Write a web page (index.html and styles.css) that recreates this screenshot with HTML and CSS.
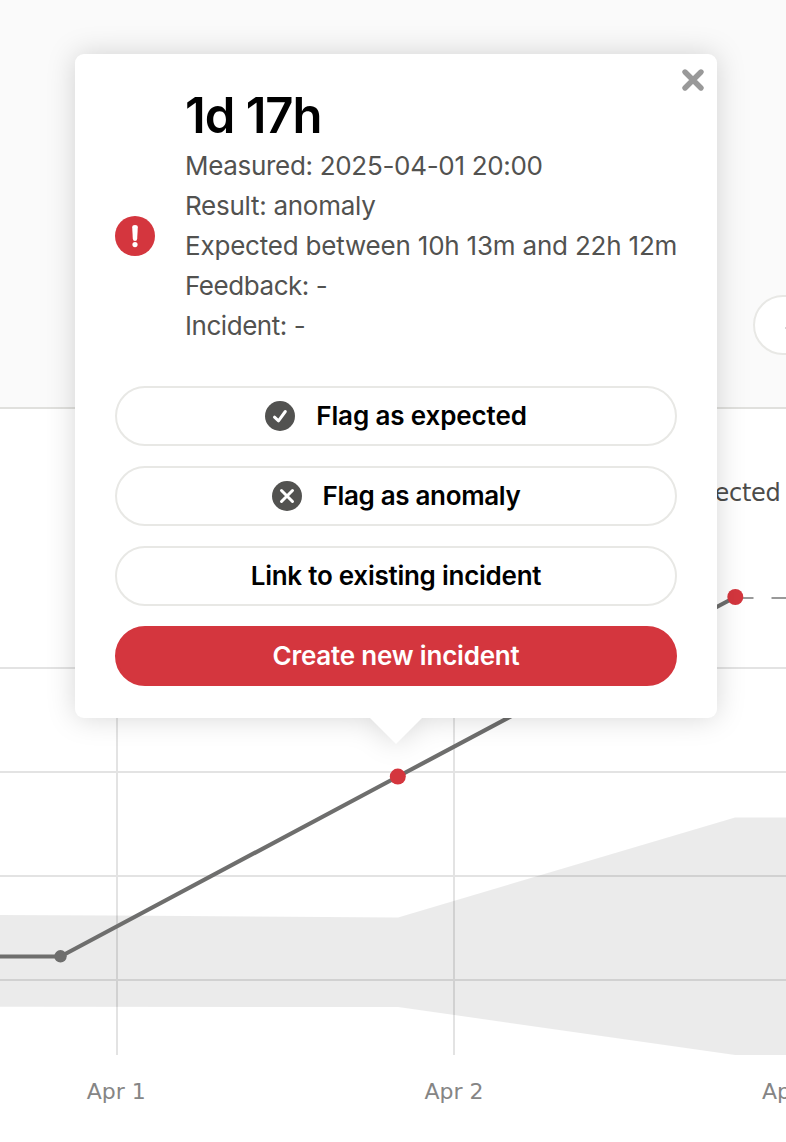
FILE: index.html
```html
<!DOCTYPE html>
<html lang="en">
<head>
<meta charset="utf-8">
<title>Measurement details</title>
<link rel="stylesheet" href="styles.css">
</head>
<body>
<div class="page">
  <header class="toolbar"><button class="toolbar-button" aria-label="More"><svg class="toolbar-icon" width="20" height="20" viewBox="0 0 20 20"><path d="M0.500 13.500L10 4L19.500 13.500"/></svg></button></header>
  <main class="chart">
    <svg class="plot" width="786" height="733" viewBox="0 409 786 733">
      <g class="grid">
        <path d="M0 668H786M0 772H786M0 876H786M0 980H786M117 668V1055M454 668V1055"/>
      </g>
      <path class="band" d="M0 915L117 915.5L398 917.5L735 817.5H786V1055H735L398 1007L0 1006.7Z"/>
      <path class="series" d="M0 956.500H60.500L398 776.500L735.500 597"/>
      <path class="forecast" d="M735 598H753.500M771.500 598H786"/>
      <circle class="point" cx="60.500" cy="956.300" r="6.200"/>
      <circle class="point-alert" cx="397.800" cy="776.600" r="8"/>
      <circle class="point-alert" cx="735.300" cy="597" r="8"/>
      <text class="legend" x="780.500" y="501" text-anchor="end">Expected</text>
      <g class="axis">
        <text x="86.800" y="1099">Apr 1</text>
        <text x="424.500" y="1099">Apr 2</text>
        <text x="762" y="1099">Apr 3</text>
      </g>
    </svg>
  </main>
  <section class="popup">
    <button class="close" aria-label="Close">
      <svg width="24" height="24" viewBox="0 0 24 24"><path d="M4 4L20 20M20 4L4 20"/></svg>
    </button>
    <div class="summary">
      <svg class="alert" width="40" height="40" viewBox="0 0 40 40">
        <circle cx="20" cy="20" r="20"/>
        <path d="M17.200 11.200Q17.200 9 20 9Q22.800 9 22.800 11.200L22.200 22.800Q22 25 20 25Q18 25 17.800 22.800Z"/>
        <circle class="dot" cx="20" cy="28.600" r="2.600"/>
      </svg>
      <div class="details">
        <h1 class="title">1d 17h</h1>
        <p class="measured">Measured: 2025-04-01 20:00</p>
        <p class="result">Result: anomaly</p>
        <p class="expected">Expected between 10h 13m and 22h 12m</p>
        <p class="feedback">Feedback: -</p>
        <p class="incident">Incident: -</p>
      </div>
    </div>
    <div class="actions">
      <button class="action"><svg class="icon" width="30" height="30" viewBox="0 0 30 30"><circle cx="15" cy="15" r="15"/><path d="M9.500 16.200L13.500 19.800L20.300 10.500"/></svg><span class="label flag-expected">Flag as expected</span></button>
      <button class="action"><svg class="icon" width="30" height="30" viewBox="0 0 30 30"><circle cx="15" cy="15" r="15"/><path d="M9.500 9.500L20.500 20.500M20.500 9.500L9.500 20.500"/></svg><span class="label flag-anomaly">Flag as anomaly</span></button>
      <button class="action"><span class="label link">Link to existing incident</span></button>
      <button class="action primary"><span class="label create">Create new incident</span></button>
    </div>
    <svg class="arrow" width="54" height="28" viewBox="0 0 54 28"><path d="M0 0H54L27 27Z"/></svg>
  </section>
</div>
</body>
</html>
```
FILE: styles.css
```css
* { box-sizing: border-box; }
body { margin: 0; background: #fff; font-family: Inter, "Liberation Sans", Arial, sans-serif; }
button { font: inherit; padding: 0; }
.page { position: relative; width: 786px; height: 1142px; overflow: hidden; }
.toolbar { height: 409px; background: #fafafa; border-bottom: 2px solid #e0e0dd; padding: 295px 0 0 753px; }
.toolbar-button { display: flex; align-items: center; width: 200px; height: 60px; padding-left: 30px; border: 2px solid #e8e8e5; border-radius: 30px; background: #fff; }
.toolbar-icon path { fill: none; stroke: #aaa; stroke-width: 1.5; }
.chart { height: 733px; }
.plot { display: block; }
.grid path { fill: none; stroke: #000; stroke-opacity: .11; stroke-width: 2; }
.band { fill: #000; fill-opacity: .08; }
.series { fill: none; stroke: #6e6e6d; stroke-width: 4.2; stroke-linejoin: round; }
.forecast { fill: none; stroke: #999; stroke-width: 2; }
.point { fill: #6e6e6d; }
.point-alert { fill: #d4363e; }
.legend { font: 24px "DejaVu Sans", Verdana, sans-serif; letter-spacing: -.3px; fill: #4c4c4a; }
.axis { font: 22px "DejaVu Sans", Verdana, sans-serif; fill: #858585; }
.popup { position: absolute; left: 75px; top: 54px; width: 642px; height: 664px; padding: 36px 40px 32px; border-radius: 9px; background: #fff; filter: drop-shadow(0 0 14px rgba(0, 0, 0, .16)); }
.arrow { position: absolute; left: 294px; top: 663px; fill: #fff; }
.close { position: absolute; left: 606px; top: 14px; width: 24px; height: 24px; border: 0; background: none; }
.close svg { display: block; }
.close path { fill: none; stroke: #999; stroke-width: 5.4; stroke-linecap: round; }
.summary { display: flex; align-items: center; gap: 30px; height: 256px; }
.alert { flex: none; margin-top: 36px; fill: #d4363e; }
.alert path, .alert .dot { fill: #fff; }
.details { color: #525250; font-size: 26px; line-height: 40px; white-space: nowrap; }
.details p { margin: 0; }
.measured { letter-spacing: -.31px; }
.result { letter-spacing: -.27px; }
.expected { letter-spacing: -.2px; }
.feedback, .incident { letter-spacing: -.45px; }
.title { margin: 0; height: 56px; font-size: 49px; line-height: 52px; font-weight: 600; color: #000; letter-spacing: -1px; }
.actions { display: flex; flex-direction: column; gap: 20px; margin-top: 40px; }
.action { display: flex; align-items: center; justify-content: center; gap: 21px; height: 60px; border: 2px solid #e8e8e5; border-radius: 30px; background: #fff; color: #000; font-size: 26px; font-weight: 600; white-space: nowrap; }
.label { padding-bottom: 2px; }
.flag-expected { letter-spacing: -.12px; }
.flag-anomaly { letter-spacing: -.33px; }
.link { letter-spacing: -.25px; }
.create { letter-spacing: -.2px; }
.primary { background: #d4363e; border-color: #d4363e; color: #fff; }
.icon { fill: #525250; }
.icon path { fill: none; stroke: #fff; stroke-width: 3; stroke-linecap: round; stroke-linejoin: round; }
```
